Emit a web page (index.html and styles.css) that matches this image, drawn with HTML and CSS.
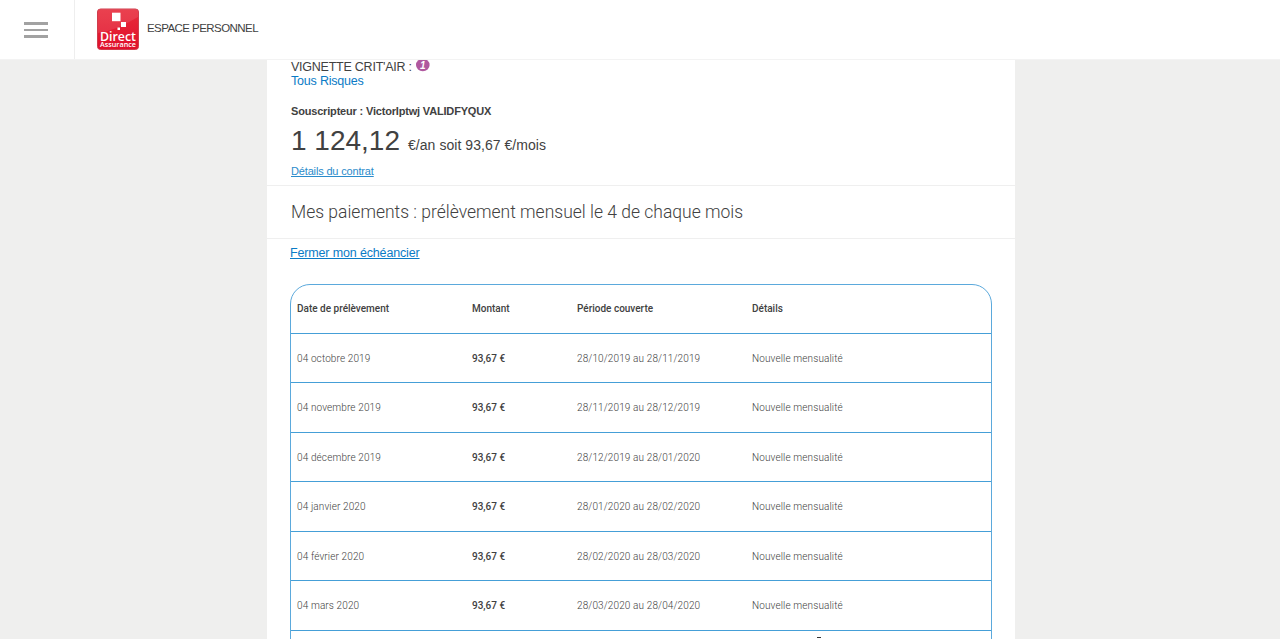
FILE: index.html
```html
<!DOCTYPE html>
<html lang="fr">

<head>
    <meta charset="UTF-8">
    <meta name="viewport" content="width=device-width, initial-scale=1.0">
    <title>Espace personnel</title>
    <link rel="stylesheet" href="styles.css">
</head>

<body>
    <header class="header">
        <div class="menu">
            <div class="burger"><span></span><span></span><span></span></div>
        </div>
        <svg class="logo" width="42" height="42" viewBox="0 0 42 42">
            <defs>
                <linearGradient id="red" x1="0" y1="0" x2="0" y2="1">
                    <stop offset="0" stop-color="#e82c3b" />
                    <stop offset="1" stop-color="#e00f2b" />
                </linearGradient>
            </defs>
            <rect x=".5" y="1" width="41" height="40.500" rx="3" fill="url(#red)" stroke="#cf3d4c" />
            <path d="M1 25 Q18 23 41 9 V4 Q41 1 38 1 H4 Q1 1 1 4 Z" fill="#fff" opacity=".1" />
            <rect x="15" y="4.700" width="8.500" height="8.500" fill="#fff" />
            <rect x="24" y="14" width="5" height="5" fill="#fff" />
            <rect x="20.500" y="19.500" width="2.500" height="2.500" fill="#fff" />
            <text class="logo-name" x="3" y="32.500" textLength="36" lengthAdjust="spacingAndGlyphs">Direct</text>
            <text class="logo-sub" x="3" y="38.500" textLength="36" lengthAdjust="spacingAndGlyphs">Assurance</text>
        </svg>
        <div class="space-name">ESPACE PERSONNEL</div>
    </header>

    <main class="panel">
        <section class="contract">
            <div class="vignette">
                <span>VIGNETTE CRIT'AIR :</span>
                <svg width="14" height="14" viewBox="0 0 14 14">
                    <ellipse cx="6.800" cy="5" rx="6.800" ry="6.200" fill="#b0589f" />
                    <text class="vignette-number" x="4" y="8.500">1</text>
                </svg>
            </div>
            <a class="formula">Tous Risques</a>
            <div class="subscriber">Souscripteur : VictorIptwj VALIDFYQUX</div>
            <div class="price"><span class="amount">1 124,12</span><span class="period">€/an soit 93,67 €/mois</span></div>
            <a class="details">Détails du contrat</a>
        </section>
        <h2 class="title">Mes paiements : prélèvement mensuel le 4 de chaque mois</h2>
        <section class="payments">
            <a class="close-link">Fermer mon échéancier</a>
            <div class="schedule">
                <div class="row head">
                    <span>Date de prélèvement</span>
                    <span>Montant</span>
                    <span>Période couverte</span>
                    <span>Détails</span>
                </div>
                <div class="row">
                    <span>04 octobre 2019</span>
                    <b>93,67 €</b>
                    <span>28/10/2019 au 28/11/2019</span>
                    <span>Nouvelle mensualité</span>
                </div>
                <div class="row">
                    <span>04 novembre 2019</span>
                    <b>93,67 €</b>
                    <span>28/11/2019 au 28/12/2019</span>
                    <span>Nouvelle mensualité</span>
                </div>
                <div class="row">
                    <span>04 décembre 2019</span>
                    <b>93,67 €</b>
                    <span>28/12/2019 au 28/01/2020</span>
                    <span>Nouvelle mensualité</span>
                </div>
                <div class="row">
                    <span>04 janvier 2020</span>
                    <b>93,67 €</b>
                    <span>28/01/2020 au 28/02/2020</span>
                    <span>Nouvelle mensualité</span>
                </div>
                <div class="row">
                    <span>04 février 2020</span>
                    <b>93,67 €</b>
                    <span>28/02/2020 au 28/03/2020</span>
                    <span>Nouvelle mensualité</span>
                </div>
                <div class="row">
                    <span>04 mars 2020</span>
                    <b>93,67 €</b>
                    <span>28/03/2020 au 28/04/2020</span>
                    <span>Nouvelle mensualité</span>
                </div>
                <div class="row"></div>
            </div>
        </section>
    </main>
    <!-- text cursor -->
    <div class="cursor"></div>
</body>

</html>
```
FILE: styles.css
```css
* {
    box-sizing: border-box;
    margin: 0;
    padding: 0;
}

body {
    height: 639px;
    overflow: hidden;
    background-color: #efefee;
    color: #414141;
    font-family: "Liberation Sans", Arial, sans-serif;
}

.header {
    display: flex;
    height: 60px;
    background-color: #fff;
    border-bottom: 1px solid #f3f3f3;
}

.menu {
    width: 75px;
    padding: 22px 0 0 24px;
    border-right: 1px solid #eee;
}

.burger {
    display: flex;
    flex-direction: column;
    gap: 4px;
    width: 24px;
}

.burger span {
    height: 2.500px;
    background-color: #a2a2a2;
}

.logo {
    margin: 8px 0 0 22px;
}

.logo-name {
    fill: #fff;
    font: 600 13px "Open Sans", sans-serif;
}

.logo-sub {
    fill: #fff;
    font: 600 7px "Open Sans", sans-serif;
}

.space-name {
    margin: 20px 0 0 8px;
    font-size: 11.500px;
    line-height: 16px;
    letter-spacing: -0.560px;
}

.panel {
    width: 748px;
    height: 579px;
    margin-left: 267px;
    background-color: #fff;
    overflow: hidden;
}

.contract {
    display: flex;
    flex-direction: column;
    align-items: flex-start;
    height: 126px;
    padding-left: 24px;
    border-bottom: 1px solid #efefef;
}

.vignette {
    display: flex;
    gap: 4px;
    height: 14px;
    font-size: 12.500px;
    line-height: 14px;
    letter-spacing: -0.240px;
}

.vignette svg {
    overflow: visible;
}

.vignette-number {
    fill: #fff;
    font: italic bold 10px "Liberation Sans", sans-serif;
}

.formula {
    font-size: 12.500px;
    line-height: 15px;
    letter-spacing: -0.200px;
    color: #0a7bc6;
}

.subscriber {
    margin-top: 15px;
    font-size: 11px;
    font-weight: bold;
    line-height: 14px;
    letter-spacing: -0.180px;
}

.price {
    display: flex;
    align-items: baseline;
    gap: 8px;
    height: 34px;
    margin-top: 6px;
    line-height: 34px;
}

.amount {
    font-size: 28px;
}

.period {
    font-size: 14px;
    letter-spacing: 0.050px;
}

.details {
    margin-top: 6px;
    font-size: 11px;
    line-height: 14px;
    letter-spacing: -0.160px;
    color: #2a8bcb;
    text-decoration: underline;
}

.title {
    height: 53px;
    padding-left: 24px;
    border-bottom: 1px solid #efefef;
    font-family: Roboto, sans-serif;
    font-size: 17.500px;
    font-weight: 300;
    line-height: 52px;
    letter-spacing: 0;
    white-space: nowrap;
}

.payments {
    padding: 6px 23px 0;
}

.close-link {
    display: block;
    font-size: 12.500px;
    line-height: 16px;
    letter-spacing: -0.150px;
    color: #0a7bc6;
    text-decoration: underline;
}

.schedule {
    margin-top: 22.500px;
    border: 1px solid #5ba9dc;
    border-radius: 20px 20px 0 0;
}

.row {
    display: grid;
    grid-template-columns: 175px 105px 175px 1fr;
    align-items: center;
    height: 49.480px;
    padding-left: 6px;
    border-bottom: 1px solid #459fd7;
    font-family: Roboto, sans-serif;
    font-size: 10px;
    font-weight: 300;
    letter-spacing: 0.120px;
    color: #414141;
}

.row b,
.head {
    font-weight: 500;
    letter-spacing: 0;
}

.cursor {
    position: absolute;
    left: 817px;
    top: 637px;
    width: 4px;
    height: 1px;
    background-color: #333;
}
```
